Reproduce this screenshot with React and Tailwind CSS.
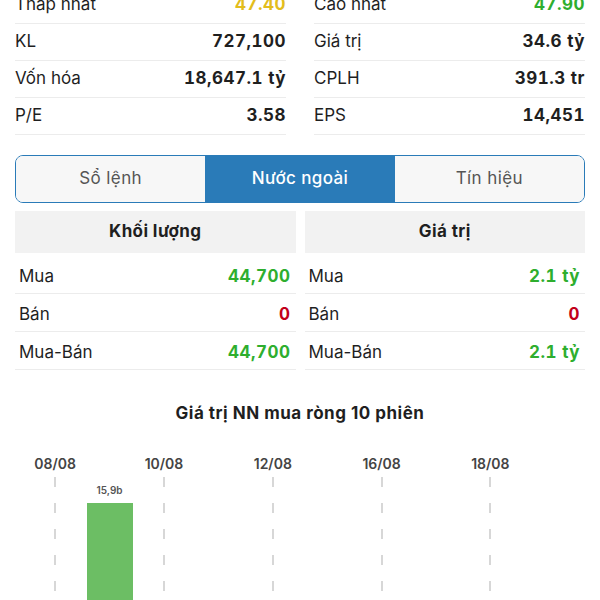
import React from "react";

const stats = [
  [
    { label: "Thấp nhất", value: "47.40", color: "text-[#e3bd1c]" },
    { label: "KL", value: "727,100" },
    { label: "Vốn hóa", value: "18,647.1 tỷ" },
    { label: "P/E", value: "3.58" },
  ],
  [
    { label: "Cao nhất", value: "47.90", color: "text-[#2eae2e]" },
    { label: "Giá trị", value: "34.6 tỷ" },
    { label: "CPLH", value: "391.3 tr" },
    { label: "EPS", value: "14,451" },
  ],
];

const foreign = [
  {
    title: "Khối lượng",
    rows: [
      { label: "Mua", value: "44,700", color: "text-[#2eae2e]" },
      { label: "Bán", value: "0", color: "text-[#c2001a]" },
      { label: "Mua-Bán", value: "44,700", color: "text-[#2eae2e]" },
    ],
  },
  {
    title: "Giá trị",
    rows: [
      { label: "Mua", value: "2.1 tỷ", color: "text-[#2eae2e]" },
      { label: "Bán", value: "0", color: "text-[#c2001a]" },
      { label: "Mua-Bán", value: "2.1 tỷ", color: "text-[#2eae2e]" },
    ],
  },
];

const labels = ["08/08", "", "10/08", "", "12/08", "", "16/08", "", "18/08", ""];

function DashLine() {
  return (
    <svg width="2" height="124" className="block">
      <line x1="1" y1="0" x2="1" y2="124" stroke="#bdbdbd" strokeWidth="1.2" strokeDasharray="10 16" />
    </svg>
  );
}

export default function App() {
  return (
    <div className="w-[600px] h-[600px] overflow-hidden bg-white font-['Inter','Noto_Sans',sans-serif] text-[17px] text-[#1f1f1f]">
      <div className="px-[15px]">
        <div className="grid grid-cols-2 gap-x-[28px] -mt-[13px]">
          {stats.map((col, i) => (
            <div key={i}>
              {col.map((r) => (
                <div key={r.label} className="h-[37px] flex items-center justify-between border-b border-[#ececec]">
                  <span>{r.label}</span>
                  <span className={`font-bold tabular-nums tracking-[0.5px] ${r.color || "text-[#1f1f1f]"}`}>{r.value}</span>
                </div>
              ))}
            </div>
          ))}
        </div>

        <div className="mt-[20px] h-[48px] flex rounded-[8px] border-[1.5px] border-[#2a7bb8] overflow-hidden tracking-[0.4px]">
          <div className="flex-1 flex items-center justify-center bg-[#f7f7f7] text-[#555]">Sổ lệnh</div>
          <div className="flex-1 flex items-center justify-center bg-[#2a7bb8] text-white font-medium">Nước ngoài</div>
          <div className="flex-1 flex items-center justify-center bg-[#f7f7f7] text-[#555]">Tín hiệu</div>
        </div>

        <div className="mt-[8px] grid grid-cols-2 gap-x-[9px]">
          {foreign.map((t) => (
            <div key={t.title}>
              <div className="h-[42px] flex items-center justify-center bg-[#f2f2f2] font-bold tracking-[0.4px]">{t.title}</div>
              <div className="mt-[3px]">
                {t.rows.map((r) => (
                  <div key={r.label} className="h-[38px] pt-[4px] flex items-center justify-between pl-[4px] pr-[5px] border-b border-[#ececec]">
                    <span>{r.label}</span>
                    <span className={`font-bold tabular-nums tracking-[0.5px] ${r.color}`}>{r.value}</span>
                  </div>
                ))}
              </div>
            </div>
          ))}
        </div>
      </div>

      <div className="mt-[32px] text-center font-bold tracking-[0.5px] leading-[22px]">Giá trị NN mua ròng 10 phiên</div>

      <div className="mt-[26px] ml-[28px] w-[544px] grid grid-cols-10">
        {labels.map((l, i) => (
          <div key={i} className="flex flex-col items-center">
            <div className="h-[26px] flex items-center text-[14px] font-semibold text-[#444] whitespace-nowrap">{l}</div>
            {l && <div className="mt-[1px]"><DashLine /></div>}
            {i === 1 && (
              <div className="flex flex-col items-center">
                <div className="h-[27px] flex items-end pb-[5px] text-[10px] font-semibold text-[#555]">15,9b</div>
                <div className="w-[46px] h-[100px] bg-[#6cbe64]" />
              </div>
            )}
          </div>
        ))}
      </div>
    </div>
  );
}
